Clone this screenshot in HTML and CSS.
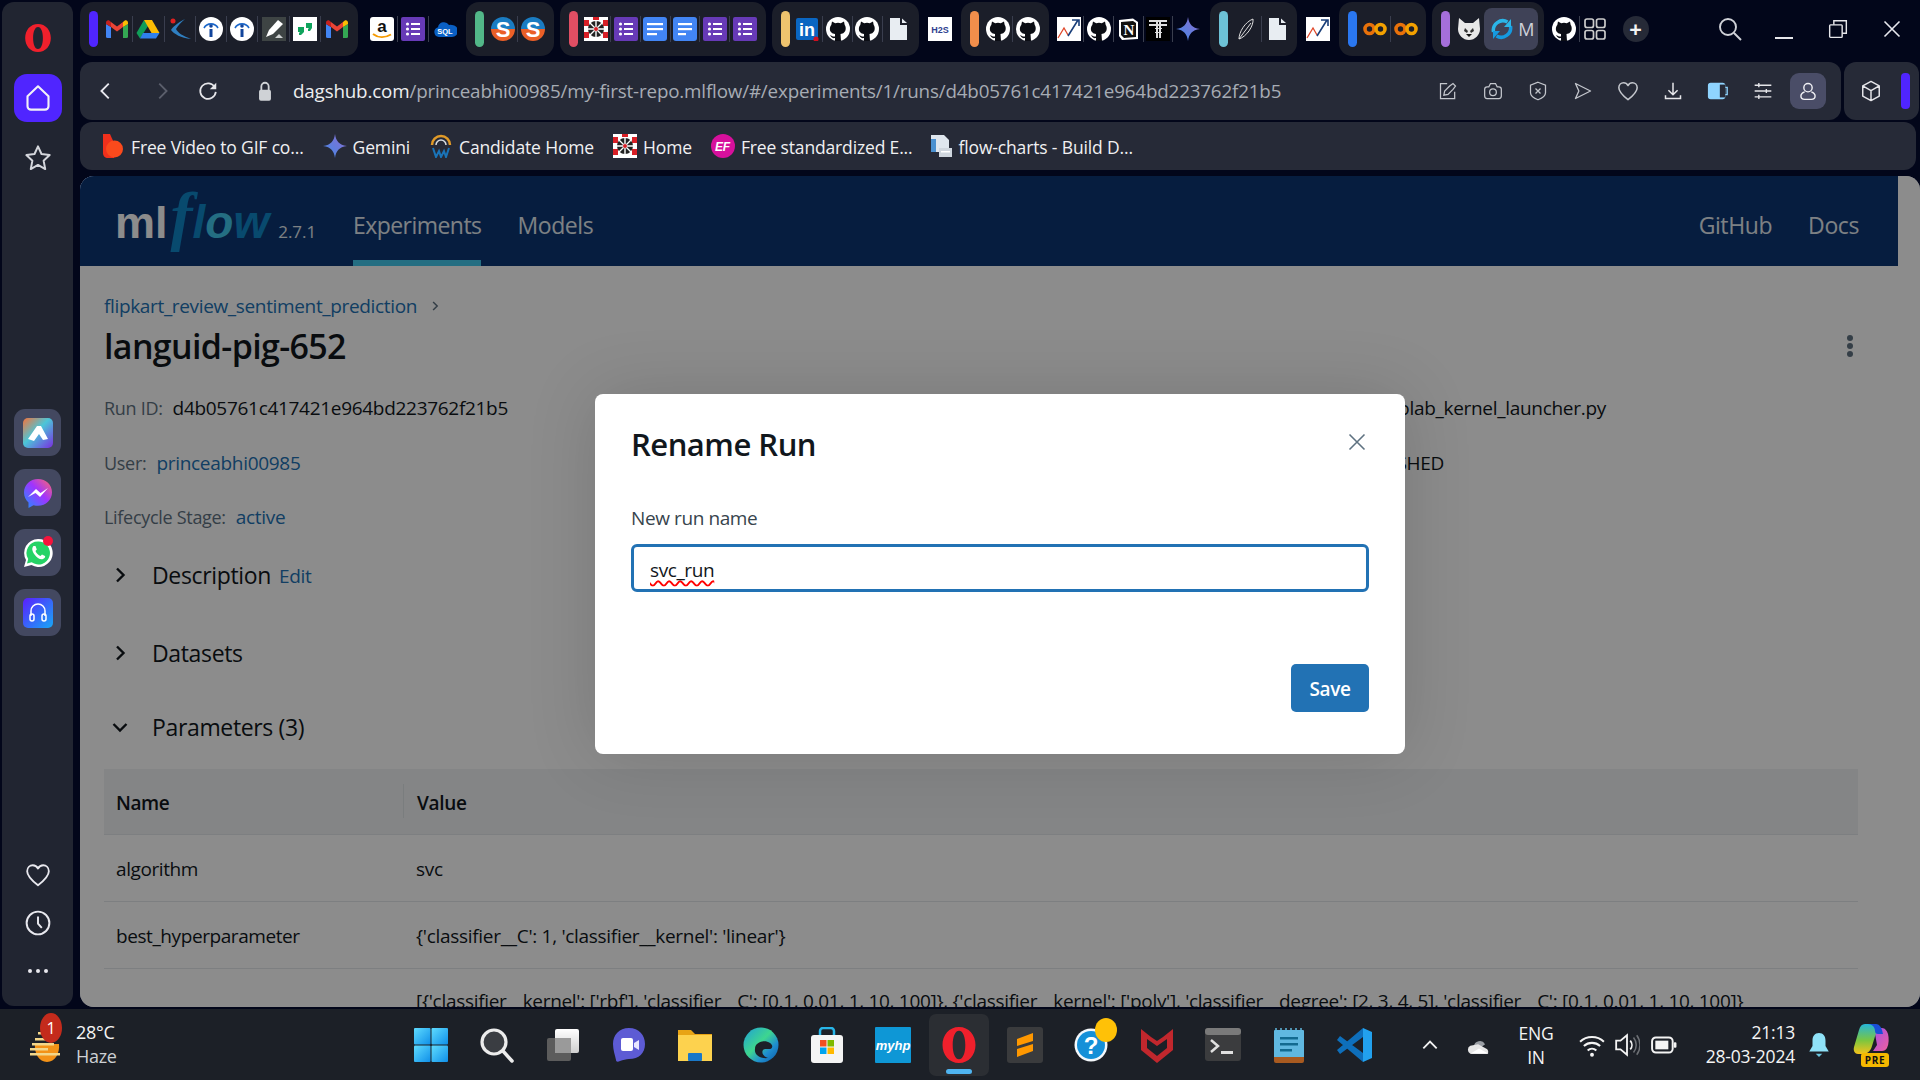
FILE: index.html
```html
<!DOCTYPE html>
<html lang="en">
<head>
<meta charset="utf-8">
<title>Rename Run</title>
<link rel="stylesheet" href="styles.css">
</head>
<body>
<svg class="defs" width="0" height="0">
<defs>
<linearGradient id="grGem" x1="0" y1="1" x2="1" y2="0"><stop offset="0" stop-color="#3f8ae8"/><stop offset="1" stop-color="#8d6cd0"/></linearGradient>
<linearGradient id="win" x1="0" y1="0" x2="1" y2="1"><stop offset="0" stop-color="#5fdcff"/><stop offset="1" stop-color="#0f8fe8"/></linearGradient>
<linearGradient id="grEdge" x1="0" y1="0" x2="1" y2="1"><stop offset="0" stop-color="#1f9fd8"/><stop offset=".45" stop-color="#3ed68f"/><stop offset=".7" stop-color="#1f8ecf"/><stop offset="1" stop-color="#0c59a4"/></linearGradient>
<linearGradient id="arc" x1="0" y1="0" x2="1" y2="1"><stop offset="0" stop-color="#f5733a"/><stop offset=".45" stop-color="#4bc6d8"/><stop offset="1" stop-color="#7a2ee0"/></linearGradient>
<linearGradient id="msg" x1="0" y1="1" x2="1" y2="0"><stop offset="0" stop-color="#1e90ff"/><stop offset=".55" stop-color="#a033ff"/><stop offset="1" stop-color="#ff6a6a"/></linearGradient>
<linearGradient id="aud" x1="0" y1="0" x2="1" y2="1"><stop offset="0" stop-color="#5a1eff"/><stop offset="1" stop-color="#18a8f5"/></linearGradient>
<linearGradient id="copL" x1="0" y1="0" x2="0" y2="1"><stop offset="0" stop-color="#25b5d8"/><stop offset=".55" stop-color="#7cc63f"/><stop offset="1" stop-color="#f5c21a"/></linearGradient>
<linearGradient id="copR" x1="0" y1="0" x2="1" y2="1"><stop offset="0" stop-color="#a050e8"/><stop offset="1" stop-color="#f0609c"/></linearGradient>
<linearGradient id="gray" x1="0" y1="0" x2="0" y2="1"><stop offset="0" stop-color="#fff"/><stop offset="1" stop-color="#cfcfcf"/></linearGradient>

<symbol id="gmail" viewBox="0 0 24 24"><path fill="#4285f4" d="M1 7v12.500A1.500 1.500 0 0 0 2.500 21H6V10z"/><path fill="#34a853" d="M23 7v12.500a1.500 1.500 0 0 1-1.500 1.500H18V10z"/><path fill="#ea4335" d="M6 10V5l6 4.500L18 5v5l-6 4.500z"/><path fill="#fbbc04" d="M18 5l1.500-1.200C21 2.700 23 3.600 23 6v1l-5 3z"/><path fill="#c5221f" d="M1 7V6c0-2.400 2-3.300 3.500-2.200L6 5v5z"/></symbol>
<symbol id="drive" viewBox="0 0 24 24"><path fill="#0f9d58" d="M8 3 .5 16l3.500 5.500L12 9z"/><path fill="#fbbc04" d="M8 3h8l7.500 13h-8z"/><path fill="#2f80ed" d="M7 16h16.500L20 21.500H4z"/></symbol>
<symbol id="kite" viewBox="0 0 24 24"><path fill="#2f7fc1" d="M17 2C9 6 5 10 3 13c3 4 10 8 20 9-8-3-13-6-15-10 2-3 5-7 9-10z"/><circle cx="5" cy="4" r="2.500" fill="#e02020"/></symbol>
<symbol id="info" viewBox="0 0 24 24"><circle cx="12" cy="12" r="12" fill="#fff"/><path d="M5 11a8 8 0 0 1 14 0" fill="none" stroke="#1a66c9" stroke-width="1.600"/><circle cx="12" cy="9" r="1.800" fill="#12459c"/><rect x="10.500" y="12" width="3" height="8" fill="#12459c"/></symbol>
<symbol id="pen" viewBox="0 0 24 24"><rect width="24" height="24" fill="#3e4444"/><path fill="#fff" d="M4 20l3-7 9-10 5 4-10 10z"/><path fill="#cfd3d3" d="M13 21l4-4 4 4z"/></symbol>
<symbol id="quote" viewBox="0 0 24 24"><rect width="24" height="24" fill="#fff"/><path fill="#0fa35c" d="M5 10h6v5l-3 3H6v-2l1-1H5zM13 6h6v5l-2 3h-2v-2l1-1h-3z"/></symbol>
<symbol id="amazon" viewBox="0 0 24 24"><rect width="24" height="24" rx="3" fill="#fff"/><text x="12" y="15" text-anchor="middle" class="sv-b" font-size="17" fill="#111">a</text><path d="M3 17c5 4 12 4 18 .5" fill="none" stroke="#f59a00" stroke-width="2"/></symbol>
<symbol id="forms" viewBox="0 0 24 24"><rect width="24" height="24" rx="2" fill="#673ab7"/><g fill="#fff"><circle cx="6.500" cy="7" r="1.600"/><circle cx="6.500" cy="12" r="1.600"/><circle cx="6.500" cy="17" r="1.600"/><rect x="10" y="6" width="9" height="2"/><rect x="10" y="11" width="9" height="2"/><rect x="10" y="16" width="9" height="2"/></g></symbol>
<symbol id="sql" viewBox="0 0 24 24"><path fill="#0a5fc4" d="M6 20a5 5 0 0 1-1-9.800A6 6 0 0 1 16 8a4.500 4.500 0 0 1 3 0 6 6 0 0 1 0 12z"/><text x="12" y="17" text-anchor="middle" class="sv-b" font-size="7.500" fill="#fff">SQL</text></symbol>
<symbol id="ss" viewBox="0 0 24 24"><path fill="#1a7cc2" d="M0 12a12 12 0 0 1 24 0z"/><path fill="#ea5f27" d="M0 12a12 12 0 0 0 24 0z"/><text x="12" y="19.500" text-anchor="middle" class="sv-b" font-size="22" fill="#fff">S</text></symbol>
<symbol id="dart" viewBox="0 0 24 24"><rect width="24" height="24" fill="#fff"/><g fill="#d81f26"><rect x="0" y="3" width="5" height="6"/><rect x="19" y="3" width="5" height="6"/><rect x="0" y="15" width="5" height="6"/><rect x="19" y="15" width="5" height="6"/><rect x="9" y="0" width="6" height="3"/></g><circle cx="12" cy="12" r="8" fill="#222"/><path d="M12 4v16M4 12h16M6 6l12 12M18 6 6 18" stroke="#fff" stroke-width="1.400"/><circle cx="12" cy="12" r="2" fill="#d81f26"/></symbol>
<symbol id="docs" viewBox="0 0 24 24"><rect width="24" height="24" rx="3" fill="#4285f4"/><g fill="#fff"><rect x="4" y="6" width="16" height="2.200"/><rect x="4" y="11" width="16" height="2.200"/><rect x="4" y="16" width="10" height="2.200"/></g></symbol>
<symbol id="docs2" viewBox="0 0 24 24"><rect width="24" height="24" rx="3" fill="#4285f4"/><g fill="#fff"><rect x="5" y="6" width="14" height="2.200"/><rect x="5" y="11" width="14" height="2.200"/><rect x="5" y="16" width="8" height="2.200"/></g></symbol>
<symbol id="li" viewBox="0 0 24 24"><rect x="0" y="1" width="22" height="22" rx="2" fill="#0a66c2"/><text x="11" y="19" text-anchor="middle" class="sv-b" font-size="18" fill="#fff">in</text><circle cx="20" cy="22" r="2.600" fill="#d01020"/></symbol>
<symbol id="gh" viewBox="0 0 24 24"><circle cx="12" cy="12" r="12" fill="#fff"/><path fill="#0b0d14" d="M6 4.500l3.200 1.700a10 10 0 0 1 5.600 0L18 4.500l.7 3.500c1.500 2 1.500 5.800-.7 7.500-1 1-2 1.300-3.500 1.500l.5 7H9v-3c-2 .5-4-.5-5-3 1.500.5 3 2 5 1.500V17c-1.500-.2-2.500-.5-3.500-1.500C3.300 14 3.500 10 5.300 8z"/></symbol>
<symbol id="doc" viewBox="0 0 24 24"><path fill="#e8edf2" d="M4 1h10v7h7v15H4z"/><path fill="#e8edf2" d="M16 1.500 21 6h-5z"/></symbol>
<symbol id="h2s" viewBox="0 0 24 24"><rect width="24" height="24" fill="#fff"/><text x="12" y="16" text-anchor="middle" class="sv-b" font-size="9" fill="#2f3f8f">H2S</text></symbol>
<symbol id="chart" viewBox="0 0 24 24"><rect width="24" height="24" fill="#fff"/><path d="M1 21l6-10 4 7" fill="none" stroke="#e0482a" stroke-width="1.300"/><path d="M11 19 21 3m-6 0h7v6" fill="none" stroke="#1a3f7a" stroke-width="1.600"/></symbol>
<symbol id="notion" viewBox="0 0 24 24"><path d="M3 3l14-1.500L22 5v17L6 23l-3-4z" fill="#fff"/><path d="M5 5l12-1 3 2v14l-12 1-3-3z" fill="#111"/><text x="13" y="18" text-anchor="middle" font-family="Liberation Serif" font-weight="700" font-size="15" fill="#fff">N</text></symbol>
<symbol id="tee" viewBox="0 0 24 24"><rect width="24" height="24" fill="#000"/><g fill="#ddd"><rect x="3" y="3" width="18" height="2"/><rect x="3" y="7" width="18" height="2"/><rect x="10" y="3" width="2" height="18"/><rect x="13" y="3" width="2" height="18"/><rect x="9" y="11" width="7" height="1"/><rect x="9" y="15" width="7" height="1"/></g></symbol>
<symbol id="gem" viewBox="0 0 24 24"><path fill="url(#grGem)" d="M12 0c1 7 4 11 12 12-8 1-11 5-12 12-1-7-4-11-12-12 8-1 11-5 12-12z"/></symbol>
<symbol id="feather" viewBox="0 0 24 24"><path d="M19 2C11 5 5 15 5 22c7-2 15-13 14-20zM5 22 17 6" fill="none" stroke="#ddd" stroke-width="1"/></symbol>
<symbol id="colab" viewBox="0 0 24 24"><circle cx="6.500" cy="12" r="4.500" fill="none" stroke="#e8710a" stroke-width="3.600"/><circle cx="17.500" cy="12" r="4.500" fill="none" stroke="#f2a000" stroke-width="3.600"/></symbol>
<symbol id="dog" viewBox="0 0 24 24"><path fill="#e8e8e8" d="M2 1l6 5h8l6-5 1 11c0 6-5 11-11 11S1 18 1 12z"/><path fill="#333" d="M8 11l3 3-1 2-3-2zM16 11l-3 3 1 2 3-2z"/><path fill="#111" d="M9 17h6l-3 3z"/></symbol>
<symbol id="sync" viewBox="0 0 24 24"><path d="M3.500 15a9.500 9.500 0 0 1 14-10" fill="none" stroke="#2bb5e8" stroke-width="3.500"/><path d="M20.500 9a9.500 9.500 0 0 1-14 10" fill="none" stroke="#159ae0" stroke-width="3.500"/><path fill="#2bb5e8" d="M21 2v8h-7z"/><path fill="#159ae0" d="M3 22v-8h7z"/></symbol>
<symbol id="ggrid" viewBox="0 0 24 24"><g fill="none" stroke="#ccc" stroke-width="1.700"><rect x="2" y="2" width="8.500" height="8.500" rx="2"/><rect x="13.500" y="2" width="8.500" height="8.500" rx="2"/><rect x="2" y="13.500" width="8.500" height="8.500" rx="2"/><rect x="13.500" y="13.500" width="8.500" height="8.500" rx="2"/></g></symbol>
<symbol id="opera" viewBox="0 0 24 24"><path fill="#f0202c" fill-rule="evenodd" d="M12 0c6.600 0 11 5.400 11 12s-4.400 12-11 12S1 18.600 1 12 5.400 0 12 0zm0 2.500c-2.700 0-4.200 4.200-4.200 9.500s1.500 9.500 4.200 9.500 4.200-4.200 4.200-9.500S14.700 2.500 12 2.500z"/></symbol>
<symbol id="home" viewBox="0 0 24 24"><path d="M3 10.500 12 2l9 8.500V19a3 3 0 0 1-3 3H6a3 3 0 0 1-3-3z" fill="none" stroke="#f2f2f8" stroke-width="1.800" stroke-linejoin="round"/></symbol>
<symbol id="star" viewBox="0 0 24 24"><path d="M12 2l3 6.600 7 .9-5.200 4.800 1.400 7.200L12 17.900l-6.200 3.600 1.400-7.200L2 9.500l7-.9z" fill="none" stroke="#d4d6dc" stroke-width="1.700" stroke-linejoin="round"/></symbol>
<symbol id="heart" viewBox="0 0 24 24"><path d="M12 21.500C5 16 2 12.500 2 8.500 2 5 4.500 3 7.200 3c2 0 3.700 1 4.800 3 1.100-2 2.800-3 4.800-3C19.500 3 22 5 22 8.500c0 4-3 7.500-10 13z" fill="none" stroke="currentColor" stroke-width="1.700" stroke-linejoin="round"/></symbol>
<symbol id="clock" viewBox="0 0 24 24"><circle cx="12" cy="12" r="10.500" fill="none" stroke="#e8e8ee" stroke-width="1.800"/><path d="M12 6v6.500l3.500 4" fill="none" stroke="#e8e8ee" stroke-width="1.800"/></symbol>
<symbol id="aria" viewBox="0 0 30 30"><rect width="30" height="30" rx="5" fill="url(#arc)"/><path fill="#fff" d="M14 8h4l7 13-5 1-4-6-5 7-6-2z"/></symbol>
<symbol id="msgr" viewBox="0 0 30 30"><path fill="url(#msg)" d="M15 1C7 1 1 7 1 14.500c0 4 1.700 7.500 4.500 10V30l5-2.800c1.400.4 3 .6 4.500.6 8 0 14-6 14-13.500S23 1 15 1z"/><path fill="#fff" d="M5 19l8-8 4.500 4L25 10l-8 9-4.500-4z"/></symbol>
<symbol id="wapp" viewBox="0 0 30 30"><path fill="#fff" d="M15 1a14 14 0 0 0-12 21L1 29l7.500-2A14 14 0 1 0 15 1z"/><path fill="#25d366" d="M15 3.500A11.500 11.500 0 0 0 5.200 21L4 25.500l4.700-1.200A11.500 11.500 0 1 0 15 3.500z"/><path fill="#fff" d="M10.500 8c-2 2-1.500 5 1 8.500s6 5.500 8.500 4.500c2-.7 2.500-2.500 2-3l-3-1.500-1.500 1.500c-2-.5-4.500-3-5-5l1.300-1.500L12.500 8z"/></symbol>
<symbol id="head" viewBox="0 0 30 30"><rect width="30" height="30" rx="5" fill="url(#aud)"/><path d="M8 18v-5a7 7 0 0 1 14 0v5" fill="none" stroke="#fff" stroke-width="1.500"/><rect x="7" y="16" width="4" height="7" rx="2" fill="none" stroke="#fff" stroke-width="1.500"/><rect x="19" y="16" width="4" height="7" rx="2" fill="none" stroke="#fff" stroke-width="1.500"/></symbol>
<symbol id="back" viewBox="0 0 24 24"><path d="M15 4l-8 8 8 8" fill="none" stroke="currentColor" stroke-width="2"/></symbol>
<symbol id="fwd" viewBox="0 0 24 24"><path d="M9 4l8 8-8 8" fill="none" stroke="currentColor" stroke-width="2"/></symbol>
<symbol id="reload" viewBox="0 0 24 24"><path d="M19.500 8A8.500 8.500 0 1 0 20.500 13" fill="none" stroke="#e6e6ea" stroke-width="1.900"/><path fill="#e6e6ea" d="M21 3v7h-7z"/></symbol>
<symbol id="lock" viewBox="0 0 24 24"><path d="M8 11V7a4 4 0 0 1 8 0v4" fill="none" stroke="#cfd2d6" stroke-width="2"/><rect x="5.500" y="10.500" width="13" height="12" rx="2" fill="#cfd2d6"/></symbol>
<symbol id="pick" viewBox="0 0 24 24"><g fill="none" stroke="#c3c6cc" stroke-width="1.500"><path d="M11 3H3v18h17v-8"/><path d="M7 17l1-5 6-6 4-3 3 3-3 4-6 6z"/></g></symbol>
<symbol id="cam" viewBox="0 0 24 24"><g fill="none" stroke="#c3c6cc" stroke-width="1.500"><path d="M2 10a3 3 0 0 1 3-3h2l2-4h6l2 4h2a3 3 0 0 1 3 3v8a3 3 0 0 1-3 3H5a3 3 0 0 1-3-3z"/><circle cx="12" cy="13.500" r="4"/></g></symbol>
<symbol id="shield" viewBox="0 0 24 24"><g fill="none" stroke="#c3c6cc" stroke-width="1.500"><path d="M12 1.500 21 5v9c0 4-4 6.500-9 8.500-5-2-9-4.500-9-8.500V5z"/><path d="M9 9l6 6M15 9l-6 6"/></g></symbol>
<symbol id="send" viewBox="0 0 24 24"><path d="M3 3l18 9-18 9 4-9z" fill="none" stroke="#c3c6cc" stroke-width="1.600" stroke-linejoin="round"/></symbol>
<symbol id="dl" viewBox="0 0 24 24"><path d="M12 2v14M6.500 11l5.500 5.500 5.500-5.500M3 17v4h18v-4" fill="none" stroke="#e6e6ea" stroke-width="1.800"/></symbol>
<symbol id="batt" viewBox="0 0 24 24"><rect x="1" y="3" width="19" height="18" rx="3" fill="#8fd4ff"/><rect x="14" y="5" width="6" height="14" fill="#262a37"/><path d="M20 8h2v8h-2" fill="none" stroke="#8fd4ff" stroke-width="1.500"/></symbol>
<symbol id="easy" viewBox="0 0 24 24"><path d="M2 5h20M2 12h20M2 19h20M7 2.500v5M16 9.500v5M7 16.500v5" fill="none" stroke="#e6e6ea" stroke-width="1.700"/></symbol>
<symbol id="user" viewBox="0 0 24 24"><circle cx="12" cy="8" r="5" fill="none" stroke="#f0f0f4" stroke-width="1.700"/><path d="M8 13c-3 1-4.500 3-4.500 5 0 2.500 2 4 4.500 4h8c2.500 0 4.500-1.500 4.500-4 0-2-1.500-4-4.500-5" fill="none" stroke="#f0f0f4" stroke-width="1.700"/></symbol>
<symbol id="cube" viewBox="0 0 24 24"><path d="M12 1.500 21 6.500v11L12 22.500 3 17.500v-11zM3 6.500l9 5 9-5M12 11.500v11" fill="none" stroke="#e6e6ea" stroke-width="1.600" stroke-linejoin="round"/></symbol>
<symbol id="mag" viewBox="0 0 24 24"><circle cx="10" cy="10" r="8" fill="none" stroke="#d0d2d8" stroke-width="1.900"/><path d="M16 16l7 7" stroke="#d0d2d8" stroke-width="1.900"/></symbol>
<symbol id="restore" viewBox="0 0 24 24"><g fill="none" stroke="#e6e6ea" stroke-width="1.700"><rect x="2" y="7" width="15" height="15" rx="1"/><path d="M7 7V2h15v15h-5"/></g></symbol>
<symbol id="cross" viewBox="0 0 24 24"><path d="M3 3l18 18M21 3 3 21" stroke="currentColor" stroke-width="1.900"/></symbol>
<symbol id="bk1" viewBox="0 0 24 24"><path fill="#f0301c" d="M2 0h7l4 9v15H7c-3 0-5-2-5-5z"/><circle cx="13.500" cy="15" r="8.500" fill="#fb4a1c"/></symbol>
<symbol id="bk3" viewBox="0 0 24 24"><path d="M3 11a9 9 0 0 1 18 0" fill="none" stroke="#e09a28" stroke-width="2.500"/><path d="M7 11a5 5 0 0 1 10 0" fill="none" stroke="#d8dde0" stroke-width="1.500"/><path d="M4 14l3 9 3-6 2 6 3-6 2 6 3-9" fill="none" stroke="#1a74b8" stroke-width="2"/></symbol>
<symbol id="ef" viewBox="0 0 24 24"><circle cx="12" cy="12" r="12" fill="#d6109c"/><text x="11.500" y="16.500" text-anchor="middle" class="sv-i" font-size="12" fill="#fff">EF</text></symbol>
<symbol id="flowc" viewBox="0 0 24 24"><path fill="#dfe6ee" d="M2 1h13l5 5v12H2z"/><rect x="2" y="5" width="5" height="13" fill="#4a90d0"/><rect x="10" y="14" width="13" height="9" fill="#cfd6de"/><rect x="12" y="17" width="9" height="1.500" fill="#fff"/></symbol>
<symbol id="windows" viewBox="0 0 36 36"><g fill="url(#win)"><rect x="1" y="1" width="16.500" height="16.500" rx="1"/><rect x="18.500" y="1" width="16.500" height="16.500" rx="1"/><rect x="1" y="18.500" width="16.500" height="16.500" rx="1"/><rect x="18.500" y="18.500" width="16.500" height="16.500" rx="1"/></g></symbol>
<symbol id="tsearch" viewBox="0 0 36 36"><circle cx="15" cy="15" r="12" fill="#3a3d42" stroke="#ececec" stroke-width="3.200"/><path d="M24 24l9 10" stroke="#ececec" stroke-width="3.500" stroke-linecap="round"/></symbol>
<symbol id="taskv" viewBox="0 0 36 36"><rect x="2" y="11" width="24" height="23" rx="2" fill="#5c5c5c"/><rect x="10" y="2" width="24" height="24" rx="2" fill="url(#gray)"/><rect x="10" y="11" width="16" height="15" fill="#9a9a9a"/></symbol>
<symbol id="meet" viewBox="0 0 36 36"><path fill="#5d5bd4" d="M18 1C8 1 2 8 2 17c0 6 2 11 3 16 0 2 2 2 4 1 3-1 6-2 9-2 10 0 16-6 16-15S28 1 18 1z"/><rect x="10" y="11" width="12" height="13" rx="2" fill="#fff"/><path fill="#e8e6ff" d="M23 16l5-3v10l-5-3z"/></symbol>
<symbol id="folder" viewBox="0 0 36 36"><path fill="#e8a415" d="M1 3h13l4 4h17v27H1z"/><rect x="1" y="8" width="34" height="26" fill="#fdd24e"/><rect x="11" y="26" width="14" height="8" rx="1" fill="#1a78c8"/></symbol>
<symbol id="edgeb" viewBox="0 0 36 36"><circle cx="18" cy="18" r="17.500" fill="url(#grEdge)"/><path fill="#1c2027" d="M14 17c3-3 9-4 13-1 3 2 3 5 0 6-3 .5-5-1-7 1-2 3 1 7 5 8-7 1-14-3-13-9 0-2 .5-4 2-5z"/></symbol>
<symbol id="store" viewBox="0 0 36 36"><path d="M11 8V4a3 3 0 0 1 3-3h8a3 3 0 0 1 3 3v4" fill="none" stroke="#27b5e8" stroke-width="2.500"/><rect x="2" y="8" width="32" height="28" rx="3" fill="#f4f4f4"/><rect x="11" y="13" width="6.500" height="6.500" fill="#f25022"/><rect x="18.500" y="13" width="6.500" height="6.500" fill="#7fba00"/><rect x="11" y="20.500" width="6.500" height="6.500" fill="#00a4ef"/><rect x="18.500" y="20.500" width="6.500" height="6.500" fill="#ffb900"/></symbol>
<symbol id="myhp" viewBox="0 0 36 36"><rect width="36" height="36" rx="1" fill="#0e97d6"/><text x="18" y="23" text-anchor="middle" class="sv-i" font-size="13" fill="#fff">myhp</text></symbol>
<symbol id="sublime" viewBox="0 0 36 36"><rect width="36" height="36" rx="3" fill="#3a3b3d"/><path fill="#ff9800" d="M26 6v8L10 19v-7zM10 30v-8l16-5v7z"/></symbol>
<symbol id="help" viewBox="0 0 36 36"><circle cx="18" cy="18" r="16.500" fill="#f4f8fb"/><circle cx="18" cy="18" r="14" fill="#1590d8"/><text x="18" y="27" text-anchor="middle" class="sv-b" font-size="24" fill="#fff">?</text></symbol>
<symbol id="mcafee" viewBox="0 0 36 36"><path fill="#c1272d" d="M2 2l10 8 6 4 6-4 10-8v21L18 36 2 23zM8 12v9l10 8 10-8v-9l-10 7z"/></symbol>
<symbol id="term" viewBox="0 0 36 36"><rect width="36" height="33" y="1" rx="3" fill="#3b3c3e"/><rect width="36" height="7" y="1" rx="3" fill="#7a7a7a"/><path d="M6 13l7 6-7 6" fill="none" stroke="#e0e0e0" stroke-width="2.500"/><rect x="16" y="24" width="12" height="3" fill="#e0e0e0"/></symbol>
<symbol id="note" viewBox="0 0 36 36"><rect x="3" y="3" width="30" height="28" rx="1" fill="#60b8e0"/><path fill="#a85a20" d="M3 30h30v4a2 2 0 0 1-2 2H5a2 2 0 0 1-2-2z"/><g fill="#126a90"><rect x="9" y="10" width="18" height="2.500"/><rect x="9" y="16" width="18" height="2.500"/><rect x="9" y="22" width="12" height="2.500"/></g><path d="M5 4V1M10 4V1M15 4V1M20 4V1M25 4V1M30 4V1" stroke="#60b8e0" stroke-width="1.500"/></symbol>
<symbol id="vscode" viewBox="0 0 36 36"><path fill="#0e6fbb" d="M3 9l23 17v9L0 13zM0 23 26 1v9L3 27z"/><path fill="#22a1ee" d="M26 1l9 4v26l-9 4z"/></symbol>
<symbol id="chev" viewBox="0 0 24 24"><path d="M4 16l8-8 8 8" fill="none" stroke="#f2f2f2" stroke-width="2.200"/></symbol>
<symbol id="cloud" viewBox="0 0 30 24"><path fill="#9a9ea4" d="M9 14a7 7 0 0 1 13-3l-9 7z"/><path fill="#e6e6e6" d="M5 22a5 5 0 0 1 0-9l9-2 9 5a4 4 0 0 1 2 6z"/><path fill="#fff" d="M5 22l10-6 11 6z"/></symbol>
<symbol id="wifi" viewBox="0 0 24 24"><g fill="none" stroke="#f4f4f4" stroke-width="1.900"><path d="M1 9a16 16 0 0 1 22 0"/><path d="M4.500 13a11 11 0 0 1 15 0"/><path d="M8 17a6 6 0 0 1 8 0"/></g><circle cx="12" cy="21" r="1.800" fill="#f4f4f4"/></symbol>
<symbol id="spk" viewBox="0 0 24 24"><path d="M2 8h4l6-5v18l-6-5H2z" fill="none" stroke="#f4f4f4" stroke-width="1.700"/><path d="M15 8a6 6 0 0 1 0 8" fill="none" stroke="#f4f4f4" stroke-width="1.600"/><path d="M18 5a11 11 0 0 1 0 14M21 3a15 15 0 0 1 0 18" fill="none" stroke="#6d7075" stroke-width="1.400"/></symbol>
<symbol id="tbatt" viewBox="0 0 24 24"><rect x="1" y="5" width="19" height="14" rx="3.500" fill="none" stroke="#f4f4f4" stroke-width="1.800"/><rect x="4" y="8" width="12" height="8" fill="#f4f4f4"/><rect x="21" y="9.500" width="2.500" height="5" rx="1" fill="#f4f4f4"/></symbol>
<symbol id="bell" viewBox="0 0 24 24"><path fill="#8fe2f8" d="M12 1c-4 0-6 3-6 7v5l-3 5h18l-3-5V8c0-4-2-7-6-7z"/><path fill="#6cc6e0" d="M9 20h6l-3 3z"/></symbol>
<symbol id="copilot" viewBox="0 0 36 36"><path fill="url(#copR)" d="M21 5h8c3 0 5 3 6 6 1 4 1 10-1 14-1 2-3 3-5 3h-9l4-6z"/><path fill="url(#copL)" d="M12 1h9c3 0 4 3 3 6l-5 16c-1 4-4 8-9 8H5c-3 0-5-3-4-7L6 7c1-4 3-6 6-6z"/><path fill="#1a50d8" d="M15 1h8c3 0 5 3 6 6l1 4h-5c-2 0-3-1-3-3 0-4-3-7-7-7z"/></symbol>
<symbol id="sun" viewBox="0 0 36 36"><path fill="#f39217" d="M7 16h24c1 9-4 18-12 18S6 25 7 16z"/><g fill="#f2d68a"><rect x="10" y="4" width="6" height="2.500"/><rect x="7" y="10" width="20" height="2.500"/><rect x="4" y="15" width="22" height="2.500"/><rect x="2" y="20" width="18" height="2.500"/><rect x="2" y="25" width="30" height="2.500"/></g></symbol>
<symbol id="chevR" viewBox="0 0 16 16"><path d="M5 1.500 11.500 8 5 14.500" fill="none" stroke="currentColor" stroke-width="2.400"/></symbol>
<symbol id="chevD" viewBox="0 0 16 16"><path d="M1.500 5 8 11.500 14.500 5" fill="none" stroke="currentColor" stroke-width="2.400"/></symbol>
</defs>
</svg>

<div class="desktop">
  <aside class="sidebar">
    <div class="side-btn"><svg class="i28"><use href="#opera"/></svg></div>
    <div class="side-btn side-home"><svg class="i28"><use href="#home"/></svg></div>
    <div class="side-btn"><svg class="i28"><use href="#star"/></svg></div>
    <div class="apps">
      <div class="app"><svg class="i30"><use href="#aria"/></svg></div>
      <div class="app"><svg class="i30"><use href="#msgr"/></svg></div>
      <div class="app app-dot"><svg class="i30"><use href="#wapp"/></svg><span class="red-dot"></span></div>
      <div class="app"><svg class="i30"><use href="#head"/></svg></div>
    </div>
    <div class="side-bottom">
      <div class="side-btn side-sm"><svg class="i26 light"><use href="#heart"/></svg></div>
      <div class="side-btn side-sm"><svg class="i26"><use href="#clock"/></svg></div>
      <div class="side-btn side-sm"><span class="dots3"><i></i><i></i><i></i></span></div>
    </div>
  </aside>

  <main class="browser">
    <div class="tabs">
      <div class="grp wide">
        <span class="bar c-purple"></span>
        <span class="s"><svg class="i"><use href="#gmail"/></svg></span><span class="s"><svg class="i"><use href="#drive"/></svg></span><span class="s"><svg class="i"><use href="#kite"/></svg></span><span class="s"><svg class="i"><use href="#info"/></svg></span><span class="s"><svg class="i"><use href="#info"/></svg></span><span class="s"><svg class="i"><use href="#pen"/></svg></span><span class="s"><svg class="i"><use href="#quote"/></svg></span><span class="s n"><svg class="i"><use href="#gmail"/></svg></span>
      </div>
      <div class="free wide first">
        <span class="s"><svg class="i"><use href="#amazon"/></svg></span><span class="s"><svg class="i"><use href="#forms"/></svg></span><span class="s n"><svg class="i"><use href="#sql"/></svg></span>
      </div>
      <div class="grp">
        <span class="bar c-green"></span>
        <span class="s"><svg class="i"><use href="#ss"/></svg></span><span class="s n"><svg class="i"><use href="#ss"/></svg></span>
      </div>
      <div class="grp">
        <span class="bar c-red"></span>
        <span class="s"><svg class="i"><use href="#dart"/></svg></span><span class="s"><svg class="i"><use href="#forms"/></svg></span><span class="s"><svg class="i"><use href="#docs"/></svg></span><span class="s"><svg class="i"><use href="#docs2"/></svg></span><span class="s"><svg class="i"><use href="#forms"/></svg></span><span class="s n"><svg class="i"><use href="#forms"/></svg></span>
      </div>
      <div class="grp">
        <span class="bar c-yellow"></span>
        <span class="s"><svg class="i"><use href="#li"/></svg></span><span class="s"><svg class="i"><use href="#gh"/></svg></span><span class="s"><svg class="i"><use href="#gh"/></svg></span><span class="s n"><svg class="i"><use href="#doc"/></svg></span>
      </div>
      <div class="free first">
        <span class="s n"><svg class="i"><use href="#h2s"/></svg></span>
      </div>
      <div class="grp">
        <span class="bar c-orange"></span>
        <span class="s"><svg class="i"><use href="#gh"/></svg></span><span class="s n"><svg class="i"><use href="#gh"/></svg></span>
      </div>
      <div class="free">
        <span class="s"><svg class="i"><use href="#chart"/></svg></span><span class="s"><svg class="i"><use href="#gh"/></svg></span><span class="s"><svg class="i"><use href="#notion"/></svg></span><span class="s"><svg class="i"><use href="#tee"/></svg></span><span class="s n"><svg class="i"><use href="#gem"/></svg></span>
      </div>
      <div class="grp first">
        <span class="bar c-cyan"></span>
        <span class="s"><svg class="i"><use href="#feather"/></svg></span><span class="s n"><svg class="i"><use href="#doc"/></svg></span>
      </div>
      <div class="free">
        <span class="s n"><svg class="i"><use href="#chart"/></svg></span>
      </div>
      <div class="grp">
        <span class="bar c-blue"></span>
        <span class="s"><svg class="i"><use href="#colab"/></svg></span><span class="s n"><svg class="i"><use href="#colab"/></svg></span>
      </div>
      <div class="grp">
        <span class="bar c-violet"></span>
        <span class="s n"><svg class="i"><use href="#dog"/></svg></span>
        <div class="active-tab"><svg class="i"><use href="#sync"/></svg><span class="active-title">M</span></div>
      </div>
      <div class="free">
        <span class="s"><svg class="i"><use href="#gh"/></svg></span><span class="s n"><svg class="i"><use href="#ggrid"/></svg></span>
      </div>
      <div class="plus">+</div>
      <div class="winctl">
        <span class="wc"><svg class="i"><use href="#mag"/></svg></span>
        <span class="wc"><span class="min"></span></span>
        <span class="wc"><svg class="i20"><use href="#restore"/></svg></span>
        <span class="wc light"><svg class="i20"><use href="#cross"/></svg></span>
      </div>
    </div>

    <div class="addr-row">
      <div class="addr">
        <span class="ab b1 light"><svg class="i22"><use href="#back"/></svg></span>
        <span class="ab b2 dim"><svg class="i22"><use href="#fwd"/></svg></span>
        <span class="ab b3"><svg class="i22"><use href="#reload"/></svg></span>
        <span class="ab b4"><svg class="i22"><use href="#lock"/></svg></span>
        <div class="url"><span class="url-host">dagshub.com</span>/princeabhi00985/my-first-repo.mlflow/#/experiments/1/runs/d4b05761c417421e964bd223762f21b5</div>
        <span class="act"><svg class="i20"><use href="#pick"/></svg></span>
        <span class="act"><svg class="i20"><use href="#cam"/></svg></span>
        <span class="act"><svg class="i20"><use href="#shield"/></svg></span>
        <span class="act"><svg class="i20"><use href="#send"/></svg></span>
        <span class="act soft"><svg class="i22"><use href="#heart"/></svg></span>
        <span class="act"><svg class="i20"><use href="#dl"/></svg></span>
        <span class="act"><svg class="i22"><use href="#batt"/></svg></span>
        <span class="act"><svg class="i20"><use href="#easy"/></svg></span>
        <span class="profile"><svg class="i20"><use href="#user"/></svg></span>
      </div>
      <div class="ext">
        <svg class="i22"><use href="#cube"/></svg>
        <span class="ext-bar"></span>
      </div>
    </div>

    <div class="bookmarks">
      <div class="bk"><svg class="i"><use href="#bk1"/></svg><span>Free Video to GIF co...</span></div>
      <div class="bk"><svg class="i"><use href="#gem"/></svg><span>Gemini</span></div>
      <div class="bk"><svg class="i"><use href="#bk3"/></svg><span>Candidate Home</span></div>
      <div class="bk"><svg class="i"><use href="#dart"/></svg><span>Home</span></div>
      <div class="bk"><svg class="i"><use href="#ef"/></svg><span>Free standardized E...</span></div>
      <div class="bk bk-last"><svg class="i"><use href="#flowc"/></svg><span>flow-charts - Build D...</span></div>
    </div>

    <section class="page">
      <nav class="ml-nav">
        <div class="logo"><span class="l-ml">ml</span><span class="l-f">f</span><span class="l-fl">l</span><span class="l-o">o</span><span class="l-fl">w</span><span class="l-v">2.7.1</span></div>
        <a class="nl on">Experiments</a>
        <a class="nl">Models</a>
        <a class="nl push">GitHub</a>
        <a class="nl">Docs</a>
      </nav>
      <div class="content">
        <div class="crumb"><a class="link">flipkart_review_sentiment_prediction</a><svg class="crumb-c"><use href="#chevR"/></svg></div>
        <div class="title-row"><h1 class="title">languid-pig-652</h1><span class="kebab"><i></i><i></i><i></i></span></div>
        <div class="meta">
          <div class="mrow"><span class="k">Run ID:</span><span class="v">d4b05761c417421e964bd223762f21b5</span></div>
          <div class="mrow"><span class="k">Source:</span><span class="src-ic"></span><span class="v">colab_kernel_launcher.py</span></div>
          <div class="mrow"><span class="k">User:</span><a class="v link">princeabhi00985</a></div>
          <div class="mrow"><span class="k">Status:</span><span class="v">FINISHED</span></div>
          <div class="mrow"><span class="k">Lifecycle Stage:</span><a class="v link">active</a></div>
        </div>
        <div class="sec s1"><svg class="cv"><use href="#chevR"/></svg><span class="sec-t">Description</span><a class="link edit">Edit</a></div>
        <div class="sec s2"><svg class="cv"><use href="#chevR"/></svg><span class="sec-t">Datasets</span></div>
        <div class="sec s3"><svg class="cv"><use href="#chevD"/></svg><span class="sec-t">Parameters (3)</span></div>
        <div class="tbl">
          <div class="tr th"><div class="td c1">Name</div><div class="td c2">Value</div></div>
          <div class="tr"><div class="td c1">algorithm</div><div class="td c2">svc</div></div>
          <div class="tr"><div class="td c1">best_hyperparameter</div><div class="td c2">{'classifier__C': 1, 'classifier__kernel': 'linear'}</div></div>
          <div class="tr long"><div class="td c1"></div><div class="td c2">[{'classifier__kernel': ['rbf'], 'classifier__C': [0.1, 0.01, 1, 10, 100]}, {'classifier__kernel': ['poly'], 'classifier__degree': [2, 3, 4, 5], 'classifier__C': [0.1, 0.01, 1, 10, 100]}</div></div>
        </div>
      </div>
      <div class="overlay">
        <div class="modal">
          <svg class="close"><use href="#cross"/></svg>
          <h2 class="m-title">Rename Run</h2>
          <label class="m-label">New run name</label>
          <div class="m-input"><span class="spell">svc_run</span></div>
          <div class="m-foot"><button class="save">Save</button></div>
        </div>
      </div>
    </section>
  </main>
</div>

<footer class="taskbar">
  <div class="weather">
    <div class="w-icon"><svg class="ti"><use href="#sun"/></svg><span class="badge">1</span></div>
    <div class="w-text"><div>28°C</div><div class="haze">Haze</div></div>
  </div>
  <div class="tk"><svg class="ti"><use href="#windows"/></svg></div>
  <div class="tk"><svg class="ti"><use href="#tsearch"/></svg></div>
  <div class="tk"><svg class="ti"><use href="#taskv"/></svg></div>
  <div class="tk"><svg class="ti"><use href="#meet"/></svg></div>
  <div class="tk"><svg class="ti"><use href="#folder"/></svg></div>
  <div class="tk"><svg class="ti"><use href="#edgeb"/></svg></div>
  <div class="tk"><svg class="ti"><use href="#store"/></svg></div>
  <div class="tk"><svg class="ti"><use href="#myhp"/></svg></div>
  <div class="tk"><div class="tk-active"><svg class="ti"><use href="#opera"/></svg><span class="tk-ind"></span></div></div>
  <div class="tk"><svg class="ti"><use href="#sublime"/></svg></div>
  <div class="tk tk-help"><svg class="ti"><use href="#help"/></svg><span class="help-dot"></span></div>
  <div class="tk"><svg class="ti"><use href="#mcafee"/></svg></div>
  <div class="tk"><svg class="ti"><use href="#term"/></svg></div>
  <div class="tk"><svg class="ti"><use href="#note"/></svg></div>
  <div class="tk"><svg class="ti"><use href="#vscode"/></svg></div>
  <div class="tray t-chev"><svg class="i20"><use href="#chev"/></svg></div>
  <div class="tray t-cloud"><svg class="cloud-i"><use href="#cloud"/></svg></div>
  <div class="t-lang"><div>ENG</div><div>IN</div></div>
  <div class="tray t-wifi"><svg class="i26b"><use href="#wifi"/></svg></div>
  <div class="tray t-spk"><svg class="i26b"><use href="#spk"/></svg></div>
  <div class="tray t-bat"><svg class="i26b"><use href="#tbatt"/></svg></div>
  <div class="t-clock"><div>21:13</div><div>28-03-2024</div></div>
  <div class="tray t-bell"><svg class="i26b"><use href="#bell"/></svg></div>
  <div class="t-cop"><svg class="cop-i"><use href="#copilot"/></svg><span class="pre">PRE</span></div>
</footer>
</body>
</html>
```
FILE: styles.css
```css
* { box-sizing: border-box; }
html, body { margin: 0; padding: 0; }
body {
  width: 1920px; height: 1080px; overflow: hidden;
  background: #02061a; color: #eee;
  font-family: "Open Sans", "Noto Sans", sans-serif;
  display: flex; flex-direction: column;
}
.defs { position: absolute; }
.sv-b { font-family: "Liberation Sans", sans-serif; font-weight: 700; }
.sv-i { font-family: "Liberation Sans", sans-serif; font-weight: 700; font-style: italic; }
.i { width: 24px; height: 24px; display: block; }
.i20 { width: 20px; height: 20px; display: block; }
.i22 { width: 22px; height: 22px; display: block; }
.i26 { width: 26px; height: 26px; display: block; }
.i28 { width: 28px; height: 28px; display: block; }
.i30 { width: 30px; height: 30px; display: block; }
.light { color: #e8e8ee; }
.dim { color: #5b5f6c; }

.desktop { height: 1009px; display: flex; flex: none; }

/* sidebar */
.sidebar {
  width: 71px; height: 1004px; margin: 2px 7px 0 2px; padding: 12px 0 11px;
  background: #212531; border-radius: 12px;
  display: flex; flex-direction: column; align-items: center; flex: none;
}
.side-btn { width: 48px; height: 48px; display: flex; align-items: center; justify-content: center; margin-bottom: 12px; border-radius: 13px; flex: none; }
.side-home { background: #5025ff; }
.apps { margin-top: 215px; display: flex; flex-direction: column; gap: 13px; }
.app { position: relative; width: 47px; height: 47px; border-radius: 11px; background: #434860; display: flex; align-items: center; justify-content: center; }
.red-dot { position: absolute; right: 8px; top: 7px; width: 10px; height: 10px; border-radius: 50%; background: #f5143c; }
.side-bottom { margin-top: auto; }
.side-sm { margin-bottom: 0; }
.dots3 { display: flex; gap: 4px; }
.dots3 i { width: 4px; height: 4px; border-radius: 50%; background: #e8e8ee; }

/* browser column */
.browser { flex: 1; min-width: 0; display: flex; flex-direction: column; }
.tabs { height: 54px; margin-top: 2px; display: flex; gap: 6px; align-items: stretch; flex: none; }
.grp { --step: 29.7px; display: flex; align-items: center; background: #1b1e29; border-radius: 13px; padding: 0 6px 0 9px; }
.free { --step: 29.7px; display: flex; align-items: center; }
.wide { --step: 31.3px; }
.first { margin-left: 1px; }
.free.wide.first { margin-left: 2px; }
.bar { width: 9px; height: 36px; border-radius: 5px; margin-right: 4px; flex: none; }
.c-purple { background: #5025ff; } .c-green { background: #52b788; } .c-red { background: #e04e63; }
.c-yellow { background: #eec36e; } .c-orange { background: #f18e4b; } .c-cyan { background: #6dc2d6; }
.c-blue { background: #2a77f0; } .c-violet { background: #a56fdb; }
.s { width: var(--step); height: 26px; display: flex; align-items: center; justify-content: center; border-right: 1px solid #3a3e4e; flex: none; }
.s.n { border-right: 0; }
.active-tab { width: 54px; height: 42px; background: #3f4257; border-radius: 8px; display: flex; align-items: center; padding-left: 6px; gap: 4px; overflow: hidden; flex: none; }
.active-title { color: #cfd1da; font-size: 18px; }
.plus { width: 26px; height: 26px; margin: auto 0 auto 7px; border-radius: 50%; background: #262a37; color: #f4f4f4; font-size: 22px; font-weight: 700; line-height: 25px; text-align: center; }
.winctl { margin-left: auto; margin-right: 1px; display: flex; }
.wc { width: 54px; display: flex; align-items: center; justify-content: center; }
.min { width: 18px; height: 2px; background: #e6e6ea; margin-top: 18px; }

/* address */
.addr-row { display: flex; gap: 3px; margin-top: 6px; height: 58px; flex: none; }
.addr { width: 1761px; background: #262a37; border-radius: 12px; display: flex; align-items: center; padding-right: 15px; }
.ab { width: 32px; display: flex; justify-content: center; flex: none; }
.b1 { margin-left: 10px; } .b2 { margin-left: 24px; } .b3 { margin-left: 14px; } .b4 { margin-left: 25px; }
.url { flex: 1; margin-left: 12px; font-size: 18.8px; letter-spacing: -0.165px; color: #a6acb4; white-space: nowrap; overflow: hidden; }
.url-host { color: #eceef0; }
.act { width: 45px; display: flex; justify-content: center; flex: none; }
.soft { color: #c3c6cc; }
.profile { width: 36px; height: 36px; margin-left: 4.5px; background: #4a4d67; border-radius: 9px; display: flex; align-items: center; justify-content: center; flex: none; }
.ext { width: 75px; background: #262a37; border-radius: 12px; display: flex; align-items: center; padding-left: 16px; gap: 19px; }
.ext-bar { width: 9px; height: 36px; background: #5025ff; border-radius: 4px; }

.bookmarks { width: 1836px; height: 48px; margin-top: 2px; background: #262a37; border-radius: 12px; display: flex; align-items: center; gap: 19px; padding-left: 21px; flex: none; font-size: 17.5px; letter-spacing: -0.15px; color: #f0f0f2; }
.bk { display: flex; align-items: center; gap: 6px; white-space: nowrap; }
.bk span { padding-top: 2px; }
.bk-last { margin-left: -3px; }

/* page */
.page { position: relative; margin-top: 6px; height: 831px; background: #fff; border-radius: 14px; overflow: hidden; color: #11171c; flex: none; }
.ml-nav { height: 90px; margin-right: 22px; background: #0b3574; display: flex; align-items: stretch; padding-right: 39px; color: #e4ebf0; }
.logo { width: 273px; padding: 7px 0 0 35px; display: flex; align-items: baseline; line-height: 1; font-family: "Liberation Sans", sans-serif; flex: none; }
.l-ml { font-size: 45px; font-weight: 700; color: #fff; }
.l-f { font-family: "Liberation Serif", serif; font-style: italic; font-weight: 700; font-size: 66px; color: #1087c8; margin-left: 3px; }
.l-fl { font-size: 46px; font-weight: 700; font-style: italic; color: #1087c8; }
.l-o { font-size: 46px; font-weight: 700; font-style: italic; color: #43c9ed; }
.l-v { font-size: 17px; font-family: "Open Sans", sans-serif; color: #e4ebf0; margin-left: 9px; }
.nl { padding-top: 14px; border-bottom: 6px solid transparent; display: flex; align-items: center; font-size: 23px; letter-spacing: -0.4px; margin-left: 36px; }
.logo + .nl { margin-left: 0; letter-spacing: -0.55px; }
.nl.on { border-bottom-color: #43c9ed; }
.nl.push { margin-left: auto; }

.content { padding: 28px 62px 0 24px; }
.link { color: #2272b4; }
.crumb { height: 24px; display: flex; align-items: center; font-size: 19px; letter-spacing: -0.35px; color: #2272b4; }
.crumb-c { width: 10px; height: 10px; margin-left: 13px; color: #5f7281; }
.title-row { height: 48px; margin-top: 4px; display: flex; align-items: center; justify-content: space-between; }
.title { margin: 0; font-size: 34px; font-weight: 600; letter-spacing: -0.65px; }
.kebab { width: 6px; display: flex; flex-direction: column; gap: 2px; margin-right: 5px; }
.kebab i { width: 6px; height: 6px; border-radius: 50%; background: #5f7281; }
.meta { margin-top: 11px; display: grid; grid-template-columns: 1194px 1fr; grid-auto-rows: 54.5px; font-size: 19px; letter-spacing: -0.3px; }
.mrow { display: flex; align-items: center; gap: 10px; white-space: nowrap; }
.mrow:nth-child(5) { grid-column: 1; }
.k { color: #5f7281; font-size: 18px; }
.src-ic { width: 11px; height: 14px; background: #5f7281; flex: none; }
.sec { height: 48px; display: flex; align-items: center; font-size: 23px; letter-spacing: -0.35px; }
.s1 { margin-top: 6px; } .s2 { margin-top: 30px; } .s3 { margin-top: 26px; }
.cv { width: 16px; height: 16px; margin: 0 24px 0 8px; color: #11171c; flex: none; }
.sec-t { color: #11171c; }
.edit { font-size: 19px; margin-left: 8px; padding-top: 2px; }
.tbl { margin-top: 18px; font-size: 19px; letter-spacing: -0.3px; }
.tr { display: flex; height: 67px; align-items: center; border-bottom: 1px solid #e4e8ec; }
.tr > .td { padding-top: 3px; }
.th { height: 66px; background: #f0f2f4; font-weight: 600; }
.td { white-space: nowrap; }
.c1 { width: 299px; padding-left: 12px; align-self: stretch; display: flex; align-items: center; flex: none; letter-spacing: -0.42px; }
.c2 { padding-left: 13px; }
.th .c2 { border-left: 1px solid #dfe3e6; align-self: center; height: 34px; display: flex; align-items: center; }
.long { height: 130px; }
.long .c2 { align-self: flex-start; padding-top: 19px; }

/* modal */
.overlay { position: absolute; inset: 0; background: rgba(0,0,0,.45); display: flex; justify-content: center; padding-top: 218px; }
.modal { position: relative; width: 810px; height: 360px; background: #fff; border-radius: 8px; padding: 30px 36px 0; box-shadow: 0 0 70px rgba(0,0,0,.14); display: flex; flex-direction: column; }
.close { position: absolute; right: 38px; top: 38px; width: 20px; height: 20px; color: #5f7281; }
.m-title { margin: -1px 0 1px; height: 42px; line-height: 42px; font-size: 31px; font-weight: 600; letter-spacing: -0.5px; color: #11171c; }
.m-label { margin-top: 40px; height: 24px; line-height: 24px; font-size: 19px; letter-spacing: -0.4px; color: #37444d; }
.m-input { margin-top: 14px; height: 48px; border: 3px solid #2272b4; border-radius: 6px; padding-left: 16px; display: flex; align-items: center; font-size: 19px; letter-spacing: -0.4px; color: #11171c; }
.spell { text-decoration: underline wavy #ff0000 1.5px; text-underline-offset: 3px; padding-top: 3px; }
.m-foot { margin-top: 72px; display: flex; justify-content: flex-end; }
.save { width: 78px; height: 48px; border: 0; border-radius: 5px; background: #2272b4; color: #fff; font-family: inherit; font-size: 19px; font-weight: 600; letter-spacing: -0.4px; padding: 2px 0 0; }

/* taskbar */
.taskbar { height: 71px; background: #1c2027; display: flex; align-items: center; flex: none; }
.weather { width: 398px; padding-left: 28px; display: flex; align-items: center; gap: 12px; flex: none; }
.w-icon { position: relative; width: 36px; height: 36px; margin-top: 2px; }
.ti { width: 36px; height: 36px; display: block; }
.badge { position: absolute; left: 12px; top: -15px; width: 22px; height: 30px; border-radius: 50%; background: #c42b1c; color: #fff; font-size: 16px; line-height: 30px; text-align: center; }
.w-text { font-size: 18px; line-height: 24px; letter-spacing: -0.3px; color: #f4f4f4; margin-top: -2px; }
.haze { color: #cdd0d4; }
.tk { position: relative; width: 66px; height: 71px; display: flex; align-items: center; justify-content: center; flex: none; }
.tk-active { position: relative; width: 60px; height: 62px; background: #2b2e33; border-radius: 7px; display: flex; align-items: center; justify-content: center; }
.tk-ind { position: absolute; left: 17px; bottom: 2px; width: 26px; height: 5px; border-radius: 3px; background: #4fb4f0; }
.help-dot { position: absolute; right: 7px; top: 9px; width: 22px; height: 24px; border-radius: 50%; background: #ffc107; }
.tray { display: flex; align-items: center; justify-content: center; flex: none; }
.i26b { width: 26px; height: 26px; display: block; }
.t-chev { width: 44px; margin-left: 20px; }
.t-cloud { width: 44px; margin-left: 5px; }
.cloud-i { width: 26px; height: 22px; display: block; }
.t-lang { width: 60px; margin-left: 5px; text-align: center; font-size: 17.5px; line-height: 24px; letter-spacing: -0.2px; color: #f4f4f4; flex: none; }
.t-wifi { width: 34px; margin-left: 9px; }
.t-spk { width: 36px; }
.t-bat { width: 38px; }
.t-clock { width: 112px; text-align: right; font-size: 17.5px; line-height: 24px; letter-spacing: -0.2px; color: #f4f4f4; flex: none; margin-top: -2px; }
.t-bell { width: 40px; margin-left: 4px; }
.t-cop { position: relative; width: 50px; height: 44px; margin-left: 8px; flex: none; }
.cop-i { width: 36px; height: 36px; display: block; margin: 0 0 0 6px; }
.pre { position: absolute; left: 14px; bottom: 0; width: 28px; height: 14px; background: #f5b800; border-radius: 3px; color: #111; font-size: 10px; font-weight: 700; line-height: 14px; text-align: center; letter-spacing: .6px; }
```
